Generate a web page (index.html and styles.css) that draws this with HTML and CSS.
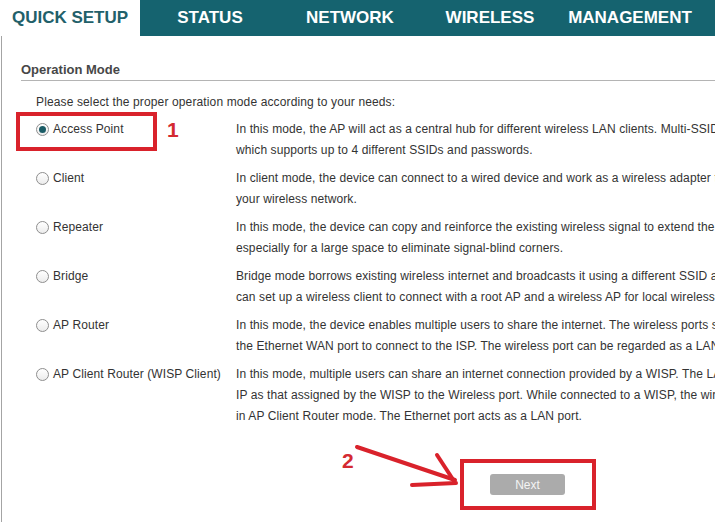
FILE: index.html
```html
<!DOCTYPE html>
<html lang="en">
<head>
<meta charset="utf-8">
<title>Quick Setup - Operation Mode</title>
<link rel="stylesheet" href="styles.css">
</head>
<body>
<nav class="topnav">
  <a class="tab tab-active">QUICK SETUP</a>
  <a class="tab">STATUS</a>
  <a class="tab">NETWORK</a>
  <a class="tab">WIRELESS</a>
  <a class="tab">MANAGEMENT</a>
</nav>
<main class="page">
  <section class="panel">
    <h2 class="panel-title">Operation Mode</h2>
    <p class="intro">Please select the proper operation mode according to your needs:</p>
    <ul class="modes">
      <li class="mode">
        <label class="mode-label"><span class="radio radio-on"></span>Access Point</label>
        <p class="mode-desc">In this mode, the AP will act as a central hub for different wireless LAN clients. Multi-SSID function is supported in this mode,<br>which supports up to 4 different SSIDs and passwords.</p>
      </li>
      <li class="mode">
        <label class="mode-label"><span class="radio"></span>Client</label>
        <p class="mode-desc">In client mode, the device can connect to a wired device and work as a wireless adapter to receive wireless signal from<br>your wireless network.</p>
      </li>
      <li class="mode">
        <label class="mode-label"><span class="radio"></span>Repeater</label>
        <p class="mode-desc">In this mode, the device can copy and reinforce the existing wireless signal to extend the coverage of the signal,<br>especially for a large space to eliminate signal-blind corners.</p>
      </li>
      <li class="mode">
        <label class="mode-label"><span class="radio"></span>Bridge</label>
        <p class="mode-desc">Bridge mode borrows existing wireless internet and broadcasts it using a different SSID and password. In this mode, you<br>can set up a wireless client to connect with a root AP and a wireless AP for local wireless clients to connect.</p>
      </li>
      <li class="mode">
        <label class="mode-label"><span class="radio"></span>AP Router</label>
        <p class="mode-desc">In this mode, the device enables multiple users to share the internet. The wireless ports share one IP address. Use<br>the Ethernet WAN port to connect to the ISP. The wireless port can be regarded as a LAN port.</p>
      </li>
      <li class="mode">
        <label class="mode-label"><span class="radio"></span>AP Client Router (WISP Client)</label>
        <p class="mode-desc">In this mode, multiple users can share an internet connection provided by a WISP. The LAN devices share the same<br>IP as that assigned by the WISP to the Wireless port. While connected to a WISP, the wireless port works as a WAN port<br>in AP Client Router mode. The Ethernet port acts as a LAN port.</p>
      </li>
    </ul>
  </section>
  <div class="actions">
    <button class="btn-next" type="button">Next</button>
  </div>
</main>

<div class="mark mark-box mark-box-1"></div>
<span class="mark mark-num mark-num-1">1</span>
<span class="mark mark-num mark-num-2">2</span>
<svg class="mark mark-arrow" width="120" height="50" viewBox="0 0 120 50">
  <g stroke="#d9222b" stroke-width="4" stroke-linecap="round" fill="none">
    <path d="M4 4 L102 37"/>
    <path d="M84 12 L101 38"/>
    <path d="M59 42 L103 40"/>
  </g>
</svg>
<div class="mark mark-box mark-box-2"></div>
</body>
</html>
```

FILE: styles.css
```css
* { box-sizing: border-box; }

html, body {
  margin: 0;
  padding: 0;
  width: 715px;
  height: 522px;
  overflow: hidden;
  background: #ffffff;
}

body {
  font-family: "Liberation Sans", Arial, sans-serif;
  font-size: 12px;
  color: #333333;
  position: relative;
}

.topnav {
  display: flex;
  height: 36px;
  background: #15636f;
}

.tab {
  flex: 0 0 140px;
  text-align: center;
  line-height: 36px;
  font-size: 17px;
  font-weight: bold;
  color: #ffffff;
  white-space: nowrap;
}

.tab-active {
  background: #ffffff;
  color: #22606a;
}

.page {
  margin-left: 1px;
  border-left: 1px solid #a4a4a4;
  padding: 26px 0 0 19px;
  height: 486px;
}

.panel-title {
  margin: 0;
  font-size: 13px;
  line-height: 16px;
  font-weight: bold;
  color: #474747;
  padding-bottom: 2px;
  border-bottom: 1px solid #b4b4b4;
  width: 700px;
}

.intro {
  margin: 11px 0 6px 15px;
  line-height: 21px;
  letter-spacing: 0.13px;
  white-space: nowrap;
}

.modes {
  list-style: none;
  margin: 0;
  padding: 0 0 0 15px;
}

.mode {
  display: grid;
  grid-template-columns: 200px auto;
  margin-bottom: 7px;
  line-height: 21px;
  letter-spacing: 0.1px;
}

.mode-label {
  display: flex;
  align-items: center;
  height: 21px;
  white-space: nowrap;
}

.radio {
  width: 13px;
  height: 13px;
  border-radius: 50%;
  border: 1px solid #8e8e8e;
  background: linear-gradient(#ffffff, #ececec);
  margin-right: 4px;
  position: relative;
  flex: none;
}

.radio-on::after {
  content: "";
  position: absolute;
  left: 2px;
  top: 2px;
  width: 7px;
  height: 7px;
  border-radius: 50%;
  background: #1b5c66;
}

.mode-desc {
  margin: 0;
  white-space: nowrap;
}

.actions {
  margin-top: 47px;
  padding-left: 469px;
}

.btn-next {
  width: 75px;
  height: 21px;
  border: none;
  border-radius: 3px;
  background: #ababab;
  color: #f4f4f4;
  font-family: "Liberation Sans", Arial, sans-serif;
  font-size: 12px;
  padding: 0;
}

/* annotation overlays */
.mark { position: absolute; }

.mark-box {
  border: 4px solid #d9222b;
}

.mark-box-1 {
  left: 16px;
  top: 112px;
  width: 141px;
  height: 39px;
}

.mark-box-2 {
  left: 460px;
  top: 459px;
  width: 136px;
  height: 51px;
}

.mark-num {
  color: #d42a31;
  font-weight: bold;
  font-size: 21px;
  line-height: 21px;
}

.mark-num-1 {
  left: 167px;
  top: 119px;
}

.mark-num-2 {
  left: 342px;
  top: 450px;
}

.mark-arrow {
  left: 353px;
  top: 443px;
}
```
